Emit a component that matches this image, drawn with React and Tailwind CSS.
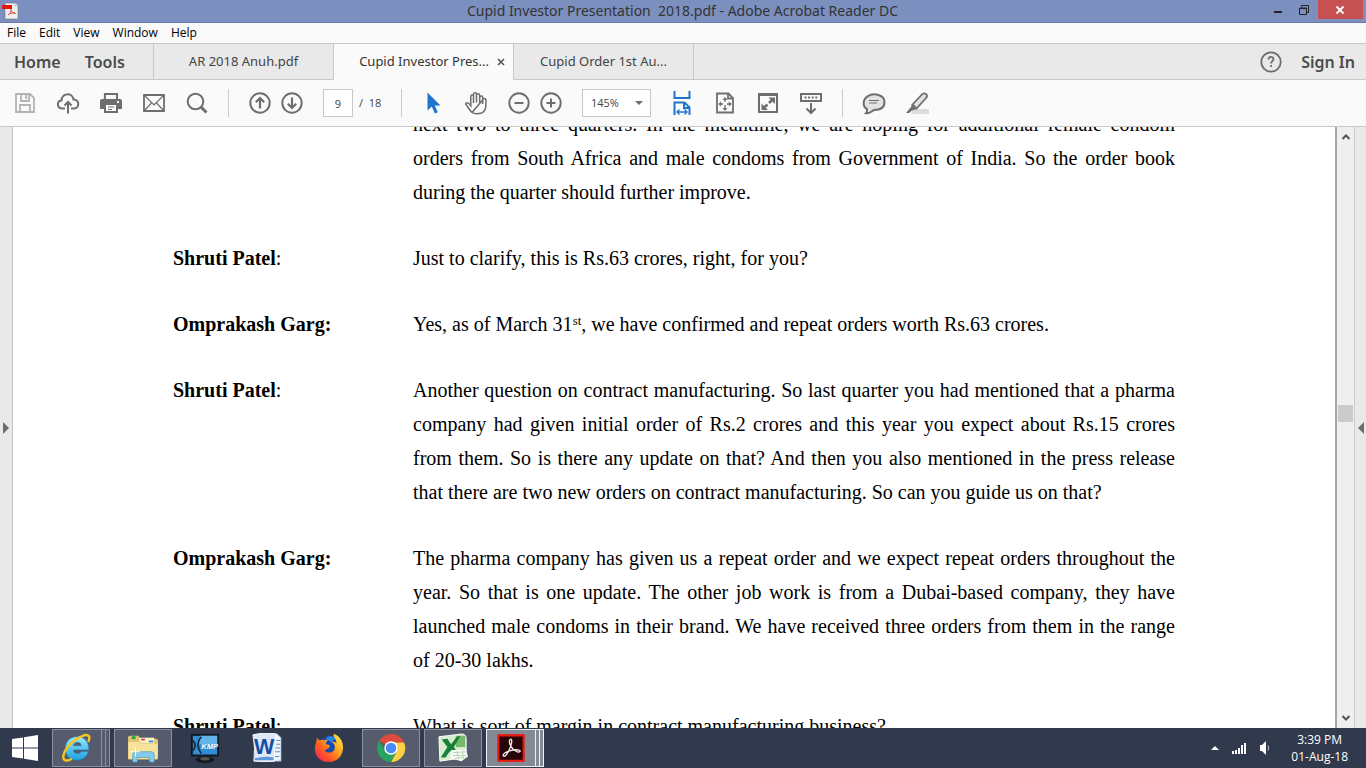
import React from "react";

const ui = "font-['Open_Sans','Noto_Sans',sans-serif]";
const uiWide = "font-['Noto_Sans','Open_Sans',sans-serif]";
const serif = "font-['Liberation_Serif',serif]";

function Icon({ children, className = "h-6 w-6" }) {
  return (
    <svg viewBox="0 0 24 24" className={className} fill="none" stroke="currentColor" strokeWidth="1.8" aria-hidden="true">
      {children}
    </svg>
  );
}

function Tool({ label, children, className = "text-[#6e6e6e]" }) {
  return (
    <button type="button" aria-label={label} className={`flex h-6 w-6 shrink-0 items-center justify-center ${className}`}>
      <Icon>{children}</Icon>
    </button>
  );
}

function Separator() {
  return <div className="h-7 w-px shrink-0 bg-[#cbcbcb]" />;
}

function TitleBar() {
  return (
    <header className="flex h-[23px] shrink-0 items-start justify-between border-b border-[#6a7ba5] bg-[#7b90bf]">
      <div className="w-[100px] shrink-0">
        <svg viewBox="0 0 18 18" className="mt-[2px] ml-[1px] h-[18px] w-[18px]" aria-hidden="true">
          <path d="M4 1h10l3 3v13H4z" fill="#eeefef" stroke="#777" strokeWidth=".6" />
          <path d="M14 1v3h3" fill="#fff" stroke="#999" strokeWidth=".6" />
          <path d="M1 3h10v4H1z" fill="#e41607" />
          <path d="M7 13c2-1 3.500-4 3-5.500-1 .5 2 4.500 4.500 4-1-1.500-4.500-.5-6 .5" fill="none" stroke="#e4483e" />
        </svg>
      </div>
      <h1 className={`truncate text-[14px] leading-[22px] text-[#333] ${uiWide}`}>
        Cupid Investor Presentation &nbsp;2018.pdf - Adobe Acrobat Reader DC
      </h1>
      <div className="flex shrink-0 pr-[3px]">
        <button type="button" aria-label="Minimize" className="flex h-[19px] w-[26px] items-center justify-center">
          <svg viewBox="0 0 10 10" className="h-[10px] w-[10px]"><path d="M1 6h8v2H1z" fill="#222" /></svg>
        </button>
        <button type="button" aria-label="Restore" className="flex h-[19px] w-[27px] items-center justify-center">
          <svg viewBox="0 0 10 10" className="h-[10px] w-[10px]" fill="none" stroke="#222">
            <path d="M.5 3h7v6.500h-7zM0 3.500h8M2.500 2V.5h7v7H8" />
          </svg>
        </button>
        <button type="button" aria-label="Close" className="flex h-[19px] w-[45px] items-center justify-center bg-[#c75050]">
          <svg viewBox="0 0 10 10" className="h-[10px] w-[10px]"><path d="M1.500 1.500l7 7m0-7l-7 7" stroke="#fff" strokeWidth="1.800" /></svg>
        </button>
      </div>
    </header>
  );
}

function MenuBar() {
  return (
    <nav className="flex h-5 shrink-0 items-center gap-[13px] bg-[#fafafa] px-[7px] text-xs leading-5 text-black">
      {["File", "Edit", "View", "Window", "Help"].map((m) => (
        <button key={m} type="button">{m}</button>
      ))}
    </nav>
  );
}

function TabBar() {
  return (
    <nav className={`flex h-[37px] shrink-0 border-t border-[#c8c8c8] bg-[#e9e9e9] text-[13px] text-[#444] ${uiWide}`}>
      <div className="flex w-[154px] shrink-0 items-center gap-6 border-r border-b border-[#c8c8c8] pl-[14px] text-[16px] font-semibold text-[#4b4b4b]">
        <button type="button">Home</button>
        <button type="button">Tools</button>
      </div>
      <button type="button" className="w-[180px] shrink-0 border-r border-b border-[#c8c8c8]">AR 2018 Anuh.pdf</button>
      <div className="flex w-[180px] shrink-0 items-center justify-end gap-2 border-r border-[#c8c8c8] bg-[#fafafa] pr-2 text-[#333]">
        <button type="button">Cupid Investor Pres...</button>
        <button type="button" aria-label="Close tab">
          <svg viewBox="0 0 8 8" className="h-2 w-2"><path d="M1 1l6 6m0-6L1 7" stroke="#555" strokeWidth="1.600" /></svg>
        </button>
      </div>
      <button type="button" className="w-[180px] shrink-0 border-r border-b border-[#c8c8c8]">Cupid Order 1st Au...</button>
      <div className="flex grow items-center justify-end gap-[18px] border-b border-[#c8c8c8] pr-[11px]">
        <button type="button" aria-label="Help" className="text-[#6e6e6e]">
          <Icon>
            <circle cx="12" cy="12" r="9.700" />
            <path d="M9.500 9.500c0-3.400 5-3.200 5-.4 0 2-2.400 2-2.400 4.400M12.100 15v2" />
          </Icon>
        </button>
        <button type="button" className="text-[16px] font-semibold text-[#4b4b4b]">Sign In</button>
      </div>
    </nav>
  );
}

function Toolbar() {
  return (
    <div className="flex h-[47px] shrink-0 items-center gap-[19px] border-b border-[#c8c8c8] bg-[#fafafa] px-[13px] text-[11px] text-[#444]">
      <Tool label="Save" className="text-[#b3b3b3]">
        <path d="M3 3h14l4 4v14H3zM8 3v7h8V3M13 4v4M7 21v-7h10v7" />
      </Tool>
      <Tool label="Upload">
        <path d="M9 17.500H6.500C.5 17.500.5 10 5.500 9.500 6 1.500 16.500 1.500 17.500 8.500c6.500 0 6 9 .5 9h-3M12 22.500V11M8.500 14.500L12 11l3.500 3.500" strokeWidth="2" />
      </Tool>
      <Tool label="Print">
        <path d="M5.900 9V2.900h12.200V9" strokeWidth="2" />
        <path d="M1 10q0-2 2-2h18q2 0 2 2v8h-4v4H5v-4H1z" fill="currentColor" stroke="none" />
        <path d="M7 14h10v6H7z" fill="#fff" stroke="none" />
        <path d="M9 16h6M9 18.500h4" strokeWidth="1.200" />
        <path d="M18 11h2" stroke="#fff" />
      </Tool>
      <Tool label="Send by email">
        <path d="M2 4h20v16H2z" />
        <path d="M2.500 4.500L12 14l9.500-9.500M2.500 19.500l7-7.500M21.500 19.500l-7-7.500" strokeWidth="1.200" />
      </Tool>
      <Tool label="Find">
        <circle cx="10.500" cy="10.500" r="7.800" strokeWidth="2" />
        <path d="M16 16l5.500 5.500" strokeWidth="3" />
      </Tool>
      <Separator />
      <div className="flex gap-2">
        <Tool label="Previous page">
          <circle cx="12" cy="12" r="9.700" strokeWidth="2" />
          <path d="M12 17.500V7M7.800 11.200L12 7l4.200 4.200" strokeWidth="2.200" />
        </Tool>
        <Tool label="Next page">
          <circle cx="12" cy="12" r="9.700" strokeWidth="2" />
          <path d="M12 6.500V17M7.800 12.800L12 17l4.200-4.200" strokeWidth="2.200" />
        </Tool>
      </div>
      <label className="flex w-[59px] shrink-0 items-center gap-[6px] whitespace-pre">
        <input aria-label="Page number" defaultValue="9" className="h-7 w-[30px] border border-[#c8c8c8] bg-white text-center" />
        <span>/  18</span>
      </label>
      <Separator />
      <Tool label="Select" className="text-[#1f74cb]">
        <path d="M6.500 1.500v18l4.300-4 3 7 3-1.300-3-6.700h5.700z" fill="currentColor" stroke="none" />
      </Tool>
      <Tool label="Pan">
        <path d="M8 21.500C5 18.500 3.500 15 1.600 13c1-2.300 3-1.200 5.200 1.700V5.500c0-2 2.700-2 2.700 0V12M9.500 6V3.300c0-2.200 3-2.200 3 0V11.500M12.500 4.500c0-2.200 3.200-2.200 3.200 0V12M15.700 6.500c0-2 3-2 3 0V13M18.700 9c0-2 3.300-2 3.300 0 0 6 .3 10-3.500 12.700-2 1.300-8.500 1.300-10.500-.2z" strokeWidth="1.500" />
      </Tool>
      <div className="flex gap-2">
        <Tool label="Zoom out">
          <circle cx="12" cy="12" r="9.700" strokeWidth="2" />
          <path d="M7.500 12h9" strokeWidth="2" />
        </Tool>
        <Tool label="Zoom in">
          <circle cx="12" cy="12" r="9.700" strokeWidth="2" />
          <path d="M7.500 12h9M12 7.500v9" strokeWidth="2" />
        </Tool>
      </div>
      <div className="relative w-[69px] shrink-0">
        <select aria-label="Zoom level" defaultValue="145%" className="h-7 w-full appearance-none rounded-none border border-[#c8c8c8] bg-white pl-2">
          <option>100%</option>
          <option>145%</option>
          <option>200%</option>
        </select>
        <svg viewBox="0 0 8 4" className="pointer-events-none absolute top-3 right-2 h-1 w-2"><path d="M0 0h8L4 4z" fill="#6e6e6e" /></svg>
      </div>
      <Tool label="Fit width" className="text-[#1f74cb]">
        <path d="M4.500 0v7h15V0M4.500 24V11.500h10l5 5V24M14 11.500V17h6" strokeWidth="2" />
        <path d="M7 21h10M9.500 18.500L7 21l2.500 2.500M14.500 18.500L17 21l-2.500 2.500" strokeWidth="1.400" />
      </Tool>
      <Tool label="Fit page">
        <path d="M4 2.500h11.500L20 7v14.500H4zM15 2.500v5h5" />
        <path d="M12 7v4M12 14v5M6 13h4M14 13h4" strokeWidth="1.300" />
        <path d="M12 6l-2.500 3h5zM12 20l-2.500-3h5zM5.200 13l3-2.500v5zM18.800 13l-3-2.500v5z" fill="currentColor" stroke="none" />
      </Tool>
      <Tool label="Full screen">
        <path d="M3 3h18v18H3z" strokeWidth="2" />
        <path d="M2.500 4h19" strokeWidth="2" />
        <path d="M19 6.500V13l-6.500-6.500zM5.500 19v-6.500L12 19z" fill="currentColor" stroke="none" />
        <path d="M13 12l4-4M7 17.500l4.500-4" strokeWidth="2.500" />
      </Tool>
      <Tool label="Read mode">
        <path d="M2 3h20v7H2z" strokeWidth="2" />
        <path d="M5.500 6.500h13" strokeDasharray="2 1.600" strokeWidth="2" />
        <path d="M12 12v10M7.500 17.500L12 22l4.500-4.500" strokeWidth="2" />
      </Tool>
      <Separator />
      <Tool label="Comment">
        <path d="M5 18C.5 15.500.5 8.500 5.500 5.300 12 1.300 22.500 4 22.500 11c0 5.500-4.500 8-10.500 8-2.500 2-5 3.500-8 3.200C5 21 5.300 20 5 18z" fill="#e2e2e2" strokeWidth="2" />
        <path d="M7 9.500h10M7 12h8" strokeWidth="1.200" />
      </Tool>
      <Tool label="Highlight">
        <path d="M8 18h16v5H6z" fill="#dcdcdc" stroke="none" />
        <path d="M7.500 13.500L17.500 3c3-1.500 5.500.5 4 3.500L11.500 17.500z" fill="#e2e2e2" />
        <path d="M7 13l5 5-5 1.500-3 2.500H1l5-6z" fill="currentColor" stroke="none" />
      </Tool>
    </div>
  );
}

const talk = [
  ["", "", <>next two to three quarters. In the meantime, we are hoping for additional female condom orders from South Africa and male condoms from Government of India. So the order book during the quarter should further improve.</>],
  ["Shruti Patel", ":", <>Just to clarify, this is Rs.63 crores, right, for you?</>],
  ["Omprakash Garg:", "", <>Yes, as of March 31<sup className="relative top-[-6px] align-baseline text-[13px] leading-none">st</sup>, we have confirmed and repeat orders worth Rs.63 crores.</>],
  ["Shruti Patel", ":", <>Another question on contract manufacturing. So last quarter you had mentioned that a pharma company had given initial order of Rs.2 crores and this year you expect about Rs.15 crores from them. So is there any update on that? And then you also mentioned in the press release that there are two new orders on contract manufacturing. So can you guide us on that?</>],
  ["Omprakash Garg:", "", <>The pharma company has given us a repeat order and we expect repeat orders throughout the year. So that is one update. The other job work is from a Dubai-based company, they have launched male condoms in their brand. We have received three orders from them in the range of 20-30 lakhs.</>],
  ["Shruti Patel", ":", <>What is sort of margin in contract manufacturing business?</>],
];

function Document() {
  return (
    <main className="flex min-h-0 grow bg-white">
      <button type="button" aria-label="Show navigation pane" className="flex w-[13px] shrink-0 items-center border-r border-[#c0c0c0] bg-[#e9e9e9] pl-[3px]">
        <svg viewBox="0 0 6 12" className="h-3 w-[6px]"><path d="M0 0l6 6-6 6z" fill="#6e6e6e" /></svg>
      </button>
      <div className="min-w-0 grow overflow-hidden pr-40 pl-40">
        <div className={`-mt-5 flex flex-col gap-8 text-[20px] leading-[34px] text-black ${serif}`}>
          {talk.map(([name, colon, text], i) => (
            <section key={i} className="flex">
              <h2 className="w-60 shrink-0"><b>{name}</b>{colon}</h2>
              <p className="grow text-justify">{text}</p>
            </section>
          ))}
        </div>
      </div>
      <div className="flex w-5 shrink-0 flex-col items-center border-r border-l-2 border-[#cdcdcd] border-l-[#a5a5a5] bg-[#efefef] py-[7px]">
        <button type="button" aria-label="Scroll up">
          <svg viewBox="0 0 8 6" className="h-[6px] w-2"><path d="M.5 5L4 1.500 7.500 5" fill="none" stroke="#555" strokeWidth="2" /></svg>
        </button>
        <div className="basis-[265px]" />
        <div className="h-[17px] w-[15px] shrink-0 bg-[#cbcbcb]" />
        <div className="grow" />
        <button type="button" aria-label="Scroll down">
          <svg viewBox="0 0 8 6" className="h-[6px] w-2"><path d="M.5 1L4 4.500 7.500 1" fill="none" stroke="#555" strokeWidth="2" /></svg>
        </button>
      </div>
      <button type="button" aria-label="Show tools pane" className="flex w-[11px] shrink-0 items-center justify-center bg-[#e9e9e9]">
        <svg viewBox="0 0 6 12" className="h-3 w-[6px]"><path d="M6 0L0 6l6 6z" fill="#6e6e6e" /></svg>
      </button>
    </main>
  );
}

function IeLogo() {
  return (
    <>
      <defs>
        <linearGradient id="ie" x1="0" y1="0" x2="0" y2="1"><stop offset="0" stopColor="#9be8fb" /><stop offset="1" stopColor="#1ba2de" /></linearGradient>
      </defs>
      <path d="M16 4C24 4 29 9.500 28.500 18H12c.5 5 7 5 8.500 1.800H28C26.500 25.500 22 29 16 29 8 29 3.500 23.500 3.500 16.500S8 4 16 4zm-4 9.500h8.500c-.5-4.800-7.500-4.800-8.500 0z" fill="url(#ie)" stroke="#1281bd" strokeWidth=".5" />
      <path d="M28 9.500C31 3 28 .5 21 3.500 11 7.500 3 17 1.500 24c-1 5.500 3.500 7 9 3.500" fill="none" stroke="#f5c325" strokeWidth="2.600" />
    </>
  );
}

function ExplorerLogo() {
  return (
    <>
      <path d="M0 5q0-2 2-2h9l2 3h17q2 0 2 2v19H0z" fill="#e3c46f" />
      <path d="M4 3.500h4v3H4z" fill="#16a63b" />
      <path d="M12 5h16v8H12z" fill="#fff5cd" />
      <path d="M14 6h4v2h-4z" fill="#df4130" />
      <path d="M22 8h5v2h-5z" fill="#3992dc" />
      <path d="M0 9h12l2 2h18v16q0 1-1 1H1q-1 0-1-1z" fill="#f7e39c" stroke="#d6b862" strokeWidth=".6" />
      <path d="M5 31v-8q0-3 3-3h17q3 0 3 3v8h-5v-5H10v5z" fill="#83cbe9" stroke="#3f98c5" strokeWidth=".7" />
      <path d="M8 15v10M3 20h10" stroke="#fff" />
    </>
  );
}

function KmpLogo() {
  return (
    <>
      <ellipse cx="16" cy="28.500" rx="10" ry="3.500" fill="#171a20" />
      <ellipse cx="16" cy="27.500" rx="5" ry="1.800" fill="#555" />
      <path d="M1 1h30v24H1z" fill="#111820" />
      <path d="M3 3h26v20H3z" fill="#318ed2" />
      <path d="M11 3h18v9H9z" fill="#62b4e8" />
      <path d="M3 8q5 5 0 11M12 4q-7 8 0 18" fill="none" stroke="#14283c" strokeWidth="1.800" />
      <text x="12" y="17" fontSize="8" fontWeight="bold" fontStyle="italic" fill="#fff">KMP</text>
    </>
  );
}

function WordLogo() {
  return (
    <>
      <path d="M12 1h15l4 4v25H12z" fill="#eef4fc" stroke="#7d9ecb" strokeWidth=".7" />
      <path d="M26 8h4M26 12h4M25 16h5M23 20h7M22 25h7" stroke="#6689ba" strokeWidth="1.200" />
      <path d="M1 2q11-3 25-1-3 14-2 29-11 1-22 0Q4 17 1 2z" fill="#dce8f8" stroke="#fff" />
      <path d="M3 27q11-3 20-1v3H3z" fill="#5f97dc" />
      <text x="2" y="22" fontSize="23" fontWeight="bold" fill="#174fa6">W</text>
    </>
  );
}

function FirefoxLogo() {
  return (
    <>
      <defs>
        <linearGradient id="ff" x1="1" y1="0" x2="0" y2="1"><stop offset="0" stopColor="#fff44f" /><stop offset=".35" stopColor="#ffb01e" /><stop offset=".65" stopColor="#ff5a24" /><stop offset="1" stopColor="#ee1567" /></linearGradient>
      </defs>
      <circle cx="17" cy="14" r="11" fill="#164bb0" />
      <path d="M13 5q6-4 11 1-5 1-5 5z" fill="#2587e5" />
      <path d="M3 5c1 1 2 2 3 3 2-1 4-1 5 0 2-1 3-1 5-1-2 1-4 3-3 5l4 1-1 3-4 2c0 4 9 4 10-1 1-4-1-6-3-8 3 0 4 1 5 2 0-5-4-7-3-10 5 1 10 7 10 14C31 24 25 31 16 31 7 31 1 25 1 17 1 12 3 10 3 5z" fill="url(#ff)" />
    </>
  );
}

function ChromeLogo() {
  return (
    <>
      <path d="M16 16L3.400 8.200A15 15 0 0130 10H16z" fill="#dd4b3e" />
      <path d="M30 10a15 15 0 01-14 21l6-12-6-9z" fill="#fdcf45" />
      <path d="M3.400 8.200A15 15 0 0016 31l6-11-12-1z" fill="#27a35d" />
      <circle cx="16" cy="16" r="7.200" fill="#fff" />
      <circle cx="16" cy="16" r="5.700" fill="#4a8af4" />
    </>
  );
}

function ExcelLogo() {
  return (
    <>
      <path d="M1 4L25 1q5 0 5 5v20L2 30z" fill="#d7ecd1" stroke="#fff" />
      <path d="M19 3h10v12H19z" fill="#75ba69" />
      <path d="M4 7l6-1 4 6 6-8 4-1-7 12 7 11h-7l-4-7-5 7H3l7-11z" fill="#19803a" />
      <path d="M14 18l16 0 2 7-7 5-12-3z" fill="#f8fbf7" />
      <path d="M16 21l14-1M16 24l14 0M18 27l9-1M20 19l2 9M26 19l1 9" stroke="#a9c5a6" strokeWidth=".8" />
    </>
  );
}

function AcrobatLogo() {
  return (
    <>
      <path d="M2.500 2.500h27v27h-27z" fill="#260607" stroke="#f1150b" strokeWidth="2.200" />
      <path d="M8 24.500c-2.500-2.500 8-7.500 15.500-6.500 4.500.8 1.500 3.500-2 1.500C16.500 17 13.500 11 14.500 8s3-1 2 3c-1 5-6 15.500-8.500 13.500z" fill="none" stroke="#f4eeee" strokeWidth="1.400" />
    </>
  );
}

const apps = [
  { name: "Internet Explorer", Logo: IeLogo, state: "stack" },
  { name: "File Explorer", Logo: ExplorerLogo, state: "open" },
  { name: "KMPlayer", Logo: KmpLogo, state: "idle" },
  { name: "Word", Logo: WordLogo, state: "idle" },
  { name: "Firefox", Logo: FirefoxLogo, state: "idle" },
  { name: "Chrome", Logo: ChromeLogo, state: "open" },
  { name: "Excel", Logo: ExcelLogo, state: "open" },
  { name: "Acrobat Reader", Logo: AcrobatLogo, state: "active" },
];

const tile = {
  idle: "border-transparent",
  open: "border-[#8d929e] bg-[#565c6c]",
  stack: "border-[#8d929e] bg-[#565c6c]",
  active: "border-[#f0f0f2] bg-[#858994]",
};

function Taskbar() {
  return (
    <footer className="flex h-10 shrink-0 items-center bg-[#31394d] text-white">
      <button type="button" aria-label="Start" className="flex w-[52px] shrink-0 justify-center pr-[2px]">
        <svg viewBox="0 0 26 26" className="h-[26px] w-[26px]" fill="#fff">
          <path d="M0 4l11-1.600v10H0zM12 2.200L26 0v12.400H12zM0 13.500h11v10L0 22zM12 13.500h14V26l-14-2.200z" />
        </svg>
      </button>
      <div className="flex grow gap-1">
        {apps.map(({ name, Logo, state }) => (
          <div key={name} className="flex h-[38px] w-[58px] shrink-0">
            <button type="button" aria-label={name} className={`flex grow items-center justify-center border ${tile[state]}`}>
              <svg viewBox="0 0 32 32" className="h-[30px] w-[30px] font-['Liberation_Sans',sans-serif]"><Logo /></svg>
            </button>
            {(state === "stack" || state === "active") && (
              <>
                <div className={`w-1 shrink-0 border-y border-r ${tile[state]}`} />
                <div className={`w-1 shrink-0 border-y border-r ${tile[state]}`} />
              </>
            )}
          </div>
        ))}
      </div>
      <div className="flex shrink-0 items-center gap-3 pr-[18px]">
        <button type="button" aria-label="Show hidden icons">
          <svg viewBox="0 0 8 4" className="h-1 w-2"><path d="M0 4l4-4 4 4z" fill="#fff" /></svg>
        </button>
        <svg viewBox="0 0 16 12" className="h-3 w-4" fill="#fff" role="img" aria-label="Network">
          <path d="M1 9h2v3H1zM4 8h2v4H4zM7 6h2v6H7zM10 3h2v9h-2zM13 1h2v11h-2z" />
        </svg>
        <svg viewBox="0 0 14 14" className="h-[14px] w-[14px]" role="img" aria-label="Volume">
          <path d="M1 4h2l4-4v14l-4-4H1z" fill="#fff" />
          <path d="M9 4.500q1.500 2.500 0 5" fill="none" stroke="#c5c9d2" />
        </svg>
        <time className="ml-[6px] text-center text-xs leading-[17px]">3:39 PM<br />01-Aug-18</time>
      </div>
    </footer>
  );
}

export default function App() {
  return (
    <div className={`flex h-screen flex-col overflow-hidden ${ui}`}>
      <TitleBar />
      <MenuBar />
      <TabBar />
      <Toolbar />
      <Document />
      <Taskbar />
    </div>
  );
}
